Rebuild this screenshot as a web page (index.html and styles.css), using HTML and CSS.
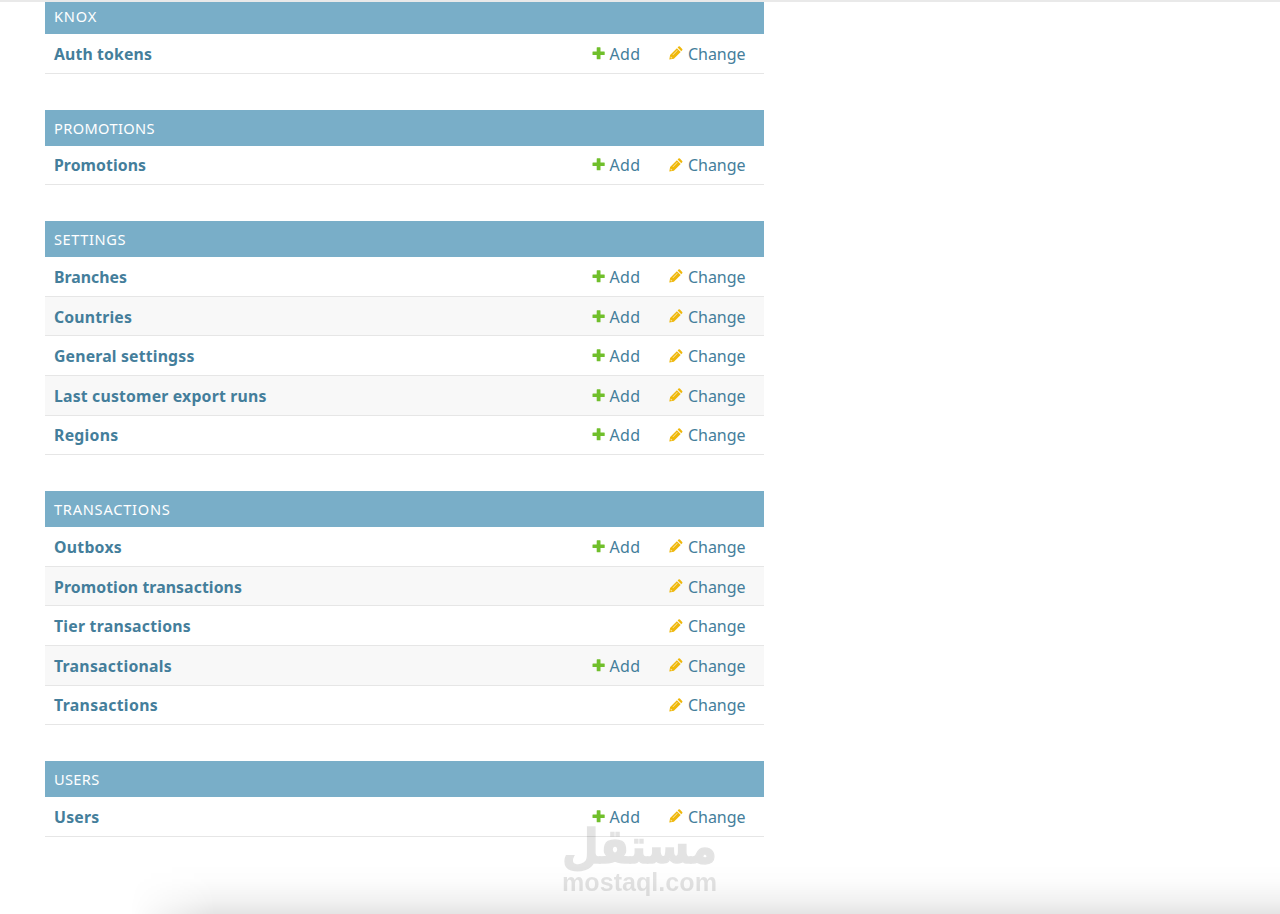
FILE: index.html
```html
<!DOCTYPE html>
<html lang="en">
<head>
<meta charset="utf-8">
<title>Site administration</title>
<link rel="stylesheet" href="styles.css">
</head>
<body>
<svg class="defs" aria-hidden="true">
  <symbol id="plus" viewBox="0 0 13 13"><path d="M5.2 .3h2.8q.5 0 .5.5v3.8h3.7q.5 0 .5.5v2.3q0 .5-.5.5H8.500v3.800q0 .5-.5.5H5.200q-.5 0-.5-.5V7.900H1q-.5 0-.5-.5V5.100q0-.5.5-.5h3.700V.8q0-.5.5-.5z" fill="#70bf2b"/></symbol>
  <symbol id="pencil" viewBox="0 0 14 14"><path d="M.3 13.500l.8-4.500L7.900 2.200l3.800 3.800-6.800 6.800zM8.600 1.500l.9-.9q.7-.6 1.400 0l2.300 2.300q.7.7 0 1.400l-.9.900z" fill="#efb80b"/><path d="M1.800 10.400l1.700 1.700-1.300.3-.7-.7zM3.500 8.700l4.600-4.600.5.5-4.600 4.600z" fill="#fff" opacity=".65"/></symbol>
</svg>
<main class="content" id="content"></main>
<div class="shade"></div>
<div class="watermark"><span class="wm-ar" lang="ar" dir="rtl">مستقل</span><span class="wm-en">mostaql.com</span></div>
<script src="app.js"></script>
</body>
</html>
```
FILE: styles.css
```css
body {
  margin: 0;
  height: 914px;
  overflow: hidden;
  position: relative;
  background: #fff;
  color: #447e9b;
  font-family: "Noto Sans", "Open Sans", sans-serif;
  font-size: 16px;
  border-top: 2px solid #e9e9e9;
  box-sizing: border-box;
}
.defs { position: absolute; width: 0; height: 0; }
.content { width: 719.5px; margin: -4px 0 0 44.5px; }
.module { margin-bottom: 36px; }
.caption {
  height: 36px;
  line-height: 37px;
  padding-left: 9.5px;
  background: #79aec8;
  color: #fff;
  font-size: 14.6px;
}
.module:first-child .caption { clip-path: inset(3.5px 0 0 0); }
.row {
  display: grid;
  grid-template-columns: 1fr 77.5px 95px;
  align-items: center;
  height: 39.6px;
  padding-left: 9.5px;
  box-sizing: border-box;
  border-bottom: 1px solid #e6e6e6;
}
.row:nth-child(odd) { background: #f8f8f8; }
.name { font-weight: 700; font-size: 15.8px; white-space: nowrap; justify-self: start; padding-top: 1px; }
.action { display: flex; align-items: center; white-space: nowrap; }
.action span { padding-top: 1px; }
.icon { width: 13px; height: 13px; margin-right: 5px; flex: none; }
.pencil { width: 14px; height: 14px; }
.shade {
  position: absolute;
  left: 130px;
  right: 0;
  bottom: 0;
  height: 50px;
  background: linear-gradient(to bottom, transparent, rgba(0,0,0,.012) 35%, rgba(0,0,0,.05) 72%, rgba(0,0,0,.105));
  -webkit-mask-image: linear-gradient(to right, transparent, #000 85px);
  mask-image: linear-gradient(to right, transparent, #000 85px);
}
.watermark { position: absolute; left: 562px; top: 822px; width: 156px; height: 76px; color: #000; opacity: .105; }
.wm-ar, .wm-en { position: absolute; left: 0; white-space: nowrap; transform-origin: 0 0; }
.wm-ar { top: 4px; font: bold 48px/36px "DejaVu Sans", sans-serif; -webkit-text-stroke: 1.5px #000; stroke-linejoin: round; }
.wm-en { top: 43px; font: bold 25px/30px "Liberation Sans", sans-serif; }
```
FILE: app.js
```js
// Each entry: [label, label width in px, has an Add link]
const modules = [
  ["KNOX", 43, [["Auth tokens", 98, true]]],
  ["PROMOTIONS", 101, [["Promotions", 92, true]]],
  ["SETTINGS", 72, [["Branches", 73, true], ["Countries", 78, true], ["General settingss", 140.5, true], ["Last customer export runs", 212.5, true], ["Regions", 64.5, true]]],
  ["TRANSACTIONS", 116.5, [["Outboxs", 68, true], ["Promotion transactions", 188, false], ["Tier transactions", 137, false], ["Transactionals", 118, true], ["Transactions", 104, false]]],
  ["USERS", 45.5, [["Users", 45.5, true]]]
];
const link = (icon, text, w) => `<a class="action"><svg class="icon ${icon}"><use href="#${icon}"/></svg><span data-w="${w}">${text}</span></a>`;
document.getElementById("content").innerHTML = modules.map(([title, tw, rows]) =>
  `<section class="module"><div class="caption"><span data-w="${tw}">${title}</span></div>` +
  rows.map(([name, w, add]) =>
    `<div class="row"><span class="name" data-w="${w}">${name}</span>${add ? link("plus", "Add", 31) : "<span></span>"}${link("pencil", "Change", 57.5)}</div>`
  ).join("") + "</section>").join("");
document.querySelectorAll("[data-w]").forEach(el => {
  const d = (el.dataset.w - el.getBoundingClientRect().width) / el.textContent.length;
  el.style.letterSpacing = d.toFixed(3) + "px";
});
document.querySelectorAll(".watermark span").forEach(el => {
  el.style.transform = `scaleX(${155 / el.getBoundingClientRect().width})`;
});
```
